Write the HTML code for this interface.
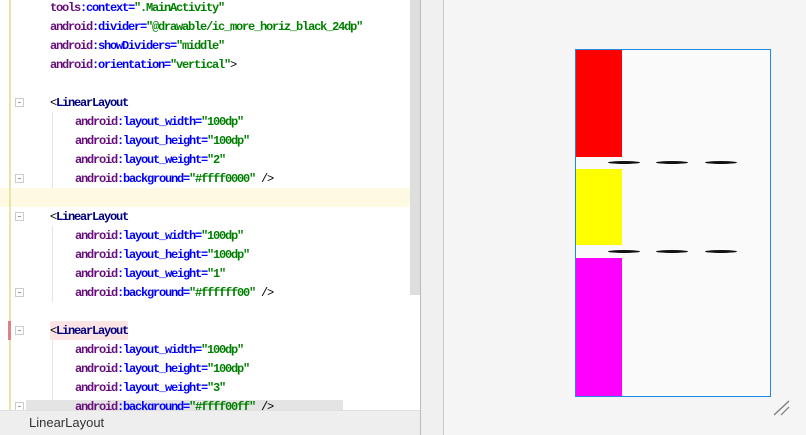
<!DOCTYPE html>
<html><head><style>
body{margin:0;width:806px;height:435px;overflow:hidden;background:#f5f5f5;position:relative;font-family:"Liberation Mono",monospace}
.ed{position:absolute;left:0;top:0;width:420px;height:435px;background:#fff}
.ln{position:absolute;left:0;height:19px;line-height:19px;font-size:12px;font-weight:bold;letter-spacing:-1.2px;white-space:pre;margin-top:1px}
.a{color:#660e7a}.b{color:#0000ff}.s{color:#008000}.t{color:#000080}.p{color:#000}
.fold{position:absolute;left:15px;width:9px;height:9px;border:1px solid #ccc;background:#fff;box-sizing:border-box}
.fold:after{content:"";position:absolute;left:2px;top:3px;width:3px;height:1px;background:#999}
.dash{position:absolute;height:3px;width:32px;background:#111;border-radius:50%}
</style></head><body>
<div class="ed">
<div style="position:absolute;left:0;top:188px;width:410px;height:19px;background:#fdf9e3"></div>
<div style="position:absolute;left:9px;top:0;width:2px;height:410px;background:#e8e4a8"></div>
<div style="position:absolute;left:8px;top:321px;width:3px;height:19px;background:#e08080"></div>
<div style="position:absolute;left:52px;top:112px;width:1px;height:76px;background:#e4e4e4"></div>
<div style="position:absolute;left:52px;top:226px;width:1px;height:76px;background:#e4e4e4"></div>
<div style="position:absolute;left:52px;top:340px;width:1px;height:70px;background:#e4e4e4"></div>
<div style="position:absolute;left:50px;top:321px;width:78px;height:19px;background:#fde4e4"></div>
<div style="position:absolute;left:26px;top:400px;width:317px;height:10px;background:#e4e4e4"></div>
<div class="fold" style="top:98px"></div><div class="fold" style="top:174px"></div>
<div class="fold" style="top:212px"></div><div class="fold" style="top:288px"></div>
<div class="fold" style="top:326px"></div><div class="fold" style="top:402px"></div>
<div class="ln" style="left:50px;top:-2px"><span class="a">tools</span><span class="b">:context=</span><span class="s">".MainActivity"</span></div>
<div class="ln" style="left:50px;top:17px"><span class="a">android</span><span class="b">:divider=</span><span class="s">"@drawable/ic_more_horiz_black_24dp"</span></div>
<div class="ln" style="left:50px;top:36px"><span class="a">android</span><span class="b">:showDividers=</span><span class="s">"middle"</span></div>
<div class="ln" style="left:50px;top:55px"><span class="a">android</span><span class="b">:orientation=</span><span class="s">"vertical"</span><span class="p" style="font-weight:normal">&gt;</span></div>
<div class="ln" style="left:50px;top:93px"><span class="p" style="font-weight:normal">&lt;</span><span class="t">LinearLayout</span></div>
<div class="ln" style="left:75px;top:112px"><span class="a">android</span><span class="b">:layout_width=</span><span class="s">"100dp"</span></div>
<div class="ln" style="left:75px;top:131px"><span class="a">android</span><span class="b">:layout_height=</span><span class="s">"100dp"</span></div>
<div class="ln" style="left:75px;top:150px"><span class="a">android</span><span class="b">:layout_weight=</span><span class="s">"2"</span></div>
<div class="ln" style="left:75px;top:169px"><span class="a">android</span><span class="b">:background=</span><span class="s">"#ffff0000"</span><span class="p" style="font-weight:normal"> /&gt;</span></div>
<div class="ln" style="left:50px;top:207px"><span class="p" style="font-weight:normal">&lt;</span><span class="t">LinearLayout</span></div>
<div class="ln" style="left:75px;top:226px"><span class="a">android</span><span class="b">:layout_width=</span><span class="s">"100dp"</span></div>
<div class="ln" style="left:75px;top:245px"><span class="a">android</span><span class="b">:layout_height=</span><span class="s">"100dp"</span></div>
<div class="ln" style="left:75px;top:264px"><span class="a">android</span><span class="b">:layout_weight=</span><span class="s">"1"</span></div>
<div class="ln" style="left:75px;top:283px"><span class="a">android</span><span class="b">:background=</span><span class="s">"#ffffff00"</span><span class="p" style="font-weight:normal"> /&gt;</span></div>
<div class="ln" style="left:50px;top:321px"><span class="p" style="font-weight:normal">&lt;</span><span class="t">LinearLayout</span></div>
<div class="ln" style="left:75px;top:340px"><span class="a">android</span><span class="b">:layout_width=</span><span class="s">"100dp"</span></div>
<div class="ln" style="left:75px;top:359px"><span class="a">android</span><span class="b">:layout_height=</span><span class="s">"100dp"</span></div>
<div class="ln" style="left:75px;top:378px"><span class="a">android</span><span class="b">:layout_weight=</span><span class="s">"3"</span></div>
<div class="ln" style="left:75px;top:397px"><span class="a">android</span><span class="b">:background=</span><span class="s">"#ffff00ff"</span><span class="p" style="font-weight:normal"> /&gt;</span></div>
<div style="position:absolute;left:410px;top:0;width:10px;height:295px;background:#dedede"></div>
<div style="position:absolute;left:0;top:410px;width:420px;height:25px;background:#eee;border-top:1px solid #e0e0e0;box-sizing:border-box;font-family:'Liberation Sans',sans-serif;font-size:13px;color:#333;line-height:24px;padding-left:29px">LinearLayout</div>
</div>
<div style="position:absolute;left:420px;top:0;width:1px;height:435px;background:#bbb"></div>
<div style="position:absolute;left:421px;top:0;width:22px;height:435px;background:#f0f0f0"></div>
<div style="position:absolute;left:443px;top:0;width:1px;height:435px;background:#c8c8c8"></div>
<div style="position:absolute;left:575px;top:49px;width:196px;height:348px;border:1px solid #1e88e5;box-sizing:border-box;background:#fafafa"></div>
<div style="position:absolute;left:576px;top:50px;width:46px;height:107px;background:#f00"></div>
<div style="position:absolute;left:576px;top:169px;width:46px;height:76px;background:#ff0"></div>
<div style="position:absolute;left:576px;top:258px;width:46px;height:138px;background:#f0f"></div>
<div class="dash" style="left:608px;top:161px"></div><div class="dash" style="left:656px;top:161px"></div><div class="dash" style="left:705px;top:161px"></div>
<div class="dash" style="left:608px;top:250px"></div><div class="dash" style="left:656px;top:250px"></div><div class="dash" style="left:705px;top:250px"></div>
<svg style="position:absolute;left:772px;top:400px" width="20" height="16"><path d="M2 15L17 1M9 15L17 7" stroke="#777" stroke-width="1.2" fill="none"/></svg>
</body></html>
